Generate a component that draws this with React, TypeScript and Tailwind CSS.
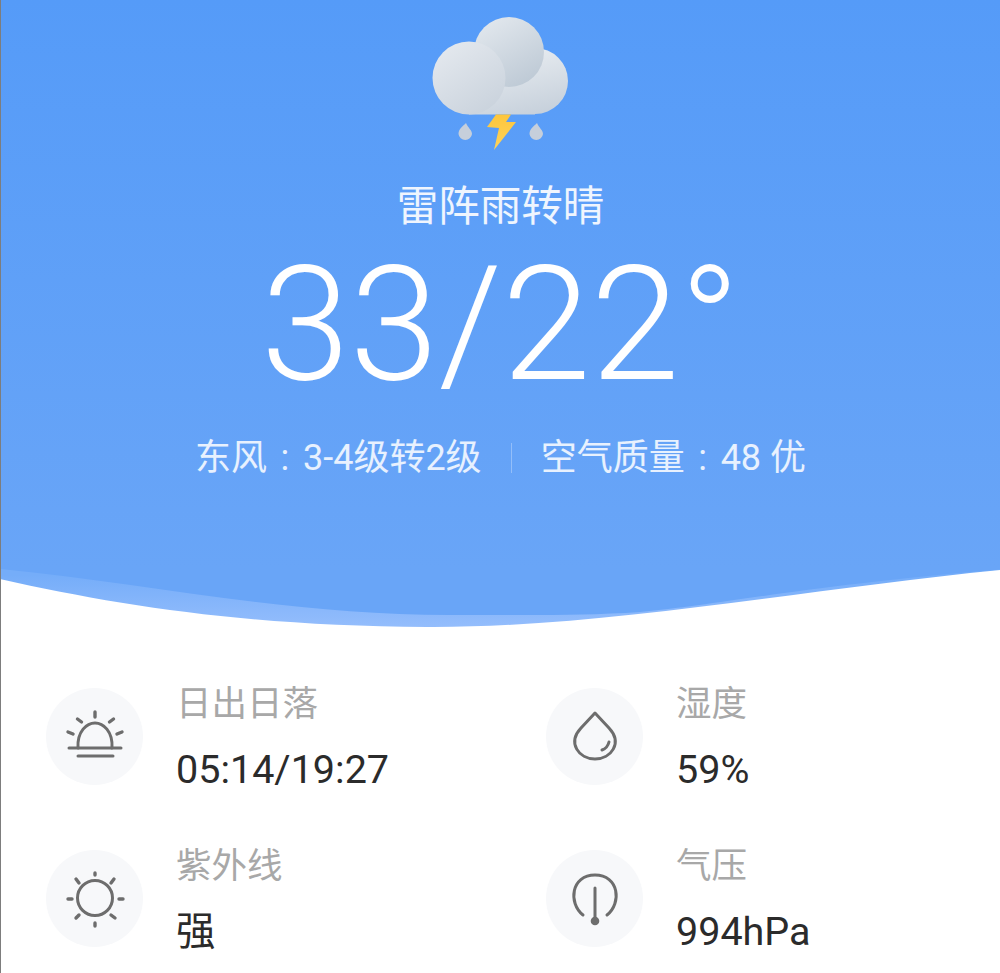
const font = { fontFamily: '"Roboto", "Noto Sans CJK SC", sans-serif' };

const stats = [
  { label: "日出日落", value: "05:14/19:27", icon: "sunrise" },
  { label: "湿度", value: "59%", icon: "drop" },
  { label: "紫外线", value: "强", icon: "sun" },
  { label: "气压", value: "994hPa", icon: "gauge" },
];

function WeatherIcon() {
  return (
    <svg width="200" height="170" viewBox="0 0 200 170" className="block">
      <defs>
        <linearGradient id="cloudA" x1="0.2" y1="0.1" x2="0.8" y2="1">
          <stop offset="0" stopColor="#e2e7ed" />
          <stop offset="1" stopColor="#c9d2dc" />
        </linearGradient>
        <linearGradient id="cloudB" x1="0.25" y1="0.05" x2="0.8" y2="1">
          <stop offset="0" stopColor="#e0e6ec" />
          <stop offset="1" stopColor="#bcc8d4" />
        </linearGradient>
        <linearGradient id="cloudC" gradientUnits="userSpaceOnUse" x1="125" y1="55" x2="140" y2="115">
          <stop offset="0" stopColor="#e4e9ee" />
          <stop offset="1" stopColor="#c6d0db" />
        </linearGradient>
        <linearGradient id="bolt" x1="0" y1="0" x2="0" y2="1">
          <stop offset="0" stopColor="#fdc63c" />
          <stop offset="1" stopColor="#fdd35c" />
        </linearGradient>
      </defs>
      <circle cx="134" cy="81" r="33" fill="url(#cloudC)" />
      <path d="M68 114.500 H134 V80 H68 Z" fill="url(#cloudC)" />
      <circle cx="108" cy="52" r="35" fill="url(#cloudB)" />
      <circle cx="68" cy="78" r="36.500" fill="url(#cloudA)" />
      <path d="M95 114.500 L110 114.500 L105 122 L115 122 L93 150 L98 128 L86 127 Z" fill="url(#bolt)" />
      <path d="M65 123 C67 128 71 130 71 134 A6.800 6.800 0 0 1 57.500 134 C57.500 129 62 126 65 123 Z" fill="#c6cfdb" />
      <path d="M136 123 C138 128 142 130 142 134 A6.800 6.800 0 0 1 128.500 134 C128.500 129 133 126 136 123 Z" fill="#c6cfdb" />
    </svg>
  );
}

function StatIcon({ name }: { name: string }) {
  return (
    <svg width="64" height="64" viewBox="0 0 64 64" fill="none" stroke="#6d6d6d" strokeWidth="3" strokeLinecap="round">
      {name === "sunrise" && (
        <g>
          <path d="M15 43 C14 26 24 18 32 18 C40 18 50 26 49 43" />
          <path d="M6 43 H58" />
          <path d="M15 51 H50" />
          <path d="M32 7 V12" strokeWidth="3.400" />
          <path d="M14.500 14 L18.500 17 M50.500 14 L46.500 17 M5 27 L10 29 M59 27 L54 29" strokeWidth="3.400" />
        </g>
      )}
      {name === "sun" && (
        <g>
          <circle cx="32" cy="31" r="17.500" />
          <path d="M32 6 V8 M32 56 V59 M5 32 H9 M56 32 H60 M13 12 L16 16 M51 12 L48 16 M13 51 L16 48 M52 51 L48 48" strokeWidth="3.400" />
        </g>
      )}
      {name === "drop" && (
        <g>
          <path d="M32 8 L46 23 C60 38 48 54 32 54 C16 54 4 38 18 23 Z" strokeLinejoin="round" />
          <path d="M39 45 C42 44 45 41 46 37" />
        </g>
      )}
      {name === "gauge" && (
        <g>
          <path d="M20 48 C5 36 8 8 32 8 C56 8 59 36 44 48" />
          <path d="M32 21 V53" />
          <circle cx="32" cy="54" r="2.800" fill="#6d6d6d" />
        </g>
      )}
    </svg>
  );
}

export default function App() {
  return (
    <div style={font} className="h-[973px] w-[1000px] overflow-hidden bg-white border-l border-l-[#7d7d7d]">
      <div className="flex h-[569px] flex-col items-center bg-gradient-to-b from-[#559bf8] to-[#69a5f7] text-white">
        <div className="h-[170px]">
          <WeatherIcon />
        </div>
        <div className="mt-[12px] text-[41.500px] leading-[50px] text-white/90">雷阵雨转晴</div>
        <div className="mt-[3px] text-[160px] font-light leading-[180px]">33/22°</div>
        <div className="mt-[21px] flex items-center text-[36px] leading-[44px] text-white/85">
          <span>
            东风<span className="inline-block w-[36px] text-center">:</span>3-4级转2级
          </span>
          <span className="mx-[29px] h-[30px] w-px bg-white/30" />
          <span>
            空气质量<span className="inline-block w-[36px] text-center">:</span>48 优
          </span>
        </div>
      </div>
      <svg width="1000" height="60" viewBox="0 569 1000 60" className="block -ml-px">
        <defs>
          <linearGradient id="band" gradientUnits="userSpaceOnUse" x1="0" y1="575" x2="0" y2="627">
            <stop offset="0" stopColor="#75adf9" />
            <stop offset="1" stopColor="#94bdfc" />
          </linearGradient>
        </defs>
        <path d="M0 579 C120 606 250 626 427 627 C600 628 800 590 1000 570 V569 H0 Z" fill="url(#band)" />
        <path d="M0 569 C150 584 290 615 450 615 C530 615 580 616 640 612 C720 605 800 586 1000 569.500 V569 H0 Z" fill="#69a5f7" />
      </svg>
      <div className="mt-[59px] grid grid-cols-[500px_1fr] gap-y-[65px] pl-[45px]">
        {stats.map((s) => (
          <div key={s.label} className="flex h-[97px] items-center gap-[33px]">
            <div className="flex h-[97px] w-[97px] shrink-0 items-center justify-center rounded-full bg-[#f7f8fa]">
              <StatIcon name={s.icon} />
            </div>
            <div className="flex flex-col">
              <span className="text-[35.500px] leading-[44px] text-[#a8a8a8]">{s.label}</span>
              <span className="mt-[22px] text-[39.500px] leading-[44px] text-[#2b2b2b]">{s.value}</span>
            </div>
          </div>
        ))}
      </div>
    </div>
  );
}
